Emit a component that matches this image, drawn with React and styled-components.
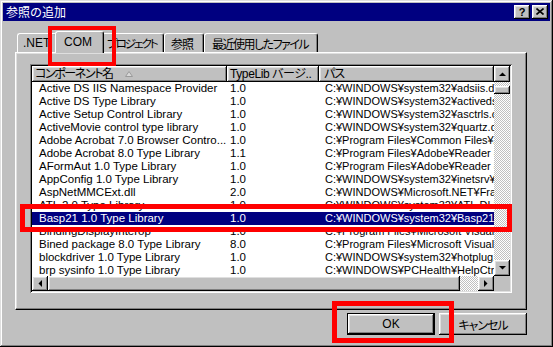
import React from "react";
import styled, { createGlobalStyle } from "styled-components";

const FONT = `"Liberation Sans", "Noto Sans CJK JP", sans-serif`;
const CJK = `"Noto Sans CJK JP", "Liberation Sans", sans-serif`;

const GlobalStyle = createGlobalStyle`
  * { box-sizing: border-box; }
  html, body { margin: 0; padding: 0; background: #c0c0c0; }
  body { font-family: ${FONT}; font-size: 12px; color: #000; overflow: hidden; }
`;

const RAISED =
  "inset -1px -1px #000, inset 1px 1px #fff, inset -2px -2px #808080, inset 2px 2px #dfdfdf";

const Window = styled.div`
  position: relative;
  width: 553px;
  height: 347px;
  padding: 3px;
  background: #c0c0c0;
  box-shadow: inset -1px -1px #000, inset 1px 1px #dfdfdf, inset -2px -2px #808080,
    inset 2px 2px #fff;
  display: flex;
  flex-direction: column;
`;

const TitleBar = styled.div`
  height: 18px;
  flex-shrink: 0;
  background: #000080;
  color: #fff;
  display: flex;
  align-items: center;
  justify-content: space-between;
  padding: 0 2px;
`;

const TitleText = styled.span`
  font-family: ${CJK};
  font-size: 12px;
  line-height: 18px;
  padding-left: 1px;
`;

const TitleButtons = styled.div`
  display: flex;
  gap: 2px;
`;

const TitleButton = styled.div`
  width: 16px;
  height: 14px;
  background: #c0c0c0;
  box-shadow: ${RAISED};
  display: flex;
  align-items: center;
  justify-content: center;
  font: bold 11px ${FONT};
  color: #000;
  padding-bottom: 1px;
`;

const Body = styled.div`
  flex: 1;
  display: flex;
  flex-direction: column;
  padding: 10px 0 0 12px;
`;

const TabStrip = styled.div`
  height: 21px;
  display: flex;
  align-items: flex-end;
  padding-left: 2px;
`;

const Tab = styled.div`
  position: relative;
  z-index: ${(p) => (p.$active ? 2 : 1)};
  flex-shrink: 0;
  width: ${(p) => p.$w}px;
  height: ${(p) => (p.$active ? 22 : 19)}px;
  margin: 0 ${(p) => (p.$active ? -2 : 0)}px ${(p) => (p.$active ? -1 : 0)}px
    ${(p) => (p.$active ? -2 : 0)}px;
  padding-left: ${(p) => p.$pl}px;
  padding-bottom: ${(p) => (p.$active ? 2 : 0)}px;
  display: flex;
  align-items: center;
  background: #c0c0c0;
  border: 1px solid #fff;
  border-bottom: none;
  border-right-color: #000;
  border-radius: 3px 3px 0 0;
  box-shadow: inset -1px 0 #808080;
  white-space: nowrap;
  overflow: hidden;
  font-family: ${FONT};
  font-size: ${(p) => p.$fs || 12}px;
  letter-spacing: ${(p) => p.$ls || 0}px;
  font-feature-settings: "palt";
`;

const Panel = styled.div`
  width: 512px;
  height: 258px;
  flex-shrink: 0;
  border-top: 1px solid #fff;
  border-left: 1px solid #fff;
  border-right: 1px solid #000;
  border-bottom: 1px solid #000;
  box-shadow: inset -1px -1px #808080, inset 1px 1px #dfdfdf;
  padding: 11px 0 0 14px;
`;

const ListView = styled.div`
  width: 482px;
  height: 229px;
  padding: 2px;
  background: #fff;
  box-shadow: inset 1px 1px #808080, inset -1px -1px #fff, inset 2px 2px #000,
    inset -2px -2px #dfdfdf;
  display: grid;
  grid-template-columns: 1fr 16px;
  grid-template-rows: 1fr 15px;
`;

const ListContent = styled.div`
  overflow: hidden;
  display: flex;
  flex-direction: column;
`;

const HeaderRow = styled.div`
  display: flex;
  height: 16px;
  flex-shrink: 0;
`;

const HeaderCell = styled.div`
  flex-shrink: 0;
  width: ${(p) => p.$w}px;
  height: 16px;
  padding-left: ${(p) => p.$pl}px;
  background: #c0c0c0;
  box-shadow: ${RAISED};
  display: flex;
  align-items: center;
  overflow: hidden;
  white-space: nowrap;
  font-family: ${FONT};
  font-size: 12px;
  letter-spacing: ${(p) => p.$ls || 0}px;
  font-feature-settings: "palt";
  line-height: 16px;
`;

const SortArrow = styled.svg`
  margin-left: 12px;
  flex-shrink: 0;
`;

const Row = styled.div`
  display: flex;
  height: 13px;
  flex-shrink: 0;
  background: ${(p) => (p.$selected ? "#000080" : "#fff")};
  color: ${(p) => (p.$selected ? "#fff" : "#000")};
`;

const Cell = styled.div`
  flex-shrink: 0;
  width: ${(p) => p.$w}px;
  padding-left: ${(p) => p.$pl}px;
  overflow: hidden;
  white-space: nowrap;
  font-family: ${FONT};
  font-size: ${(p) => p.$fs || 11.5}px;
  line-height: 13px;
`;

const VScroll = styled.div`
  display: flex;
  flex-direction: column;
`;

const HScroll = styled.div`
  display: flex;
`;

const ScrollButton = styled.div`
  flex-shrink: 0;
  width: 16px;
  height: ${(p) => p.$h || 16}px;
  background: #c0c0c0;
  box-shadow: ${RAISED};
  display: flex;
  align-items: center;
  justify-content: center;
`;

const Track = styled.div`
  flex: 1;
  display: flex;
  flex-direction: ${(p) => (p.$vertical ? "column" : "row")};
  background-color: #c0c0c0;
  background-image: repeating-conic-gradient(#fff 0 25%, #c0c0c0 0 50%);
  background-size: 2px 2px;
`;

const Thumb = styled.div`
  flex-shrink: 0;
  width: ${(p) => p.$w}px;
  height: ${(p) => p.$h}px;
  margin-top: ${(p) => p.$mt || 0}px;
  background: #c0c0c0;
  box-shadow: ${RAISED};
`;

const Corner = styled.div`
  background: #c0c0c0;
`;

const ButtonRow = styled.div`
  width: 512px;
  display: flex;
  justify-content: flex-end;
  gap: 4px;
  margin-top: 3px;
`;

const Button = styled.div`
  width: 88px;
  height: 22px;
  background: #c0c0c0;
  border: ${(p) => (p.$default ? "1px solid #000" : "none")};
  box-shadow: ${RAISED};
  display: flex;
  align-items: center;
  justify-content: center;
  font-family: ${FONT};
  font-size: 12px;
  letter-spacing: ${(p) => p.$ls || 0}px;
  font-feature-settings: "palt";
  color: #000;
`;

const Highlight = styled.div`
  position: absolute;
  left: ${(p) => p.$x}px;
  top: ${(p) => p.$y}px;
  width: ${(p) => p.$w}px;
  height: ${(p) => p.$h}px;
  border: ${(p) => p.$t}px solid #ff0000;
  pointer-events: none;
  z-index: 10;
`;

const Arrow = ({ dir }) => {
  const pts = {
    up: "0,4 7,4 3.5,0.5",
    down: "0,0 7,0 3.5,3.5",
    left: "4,0 4,7 0.5,3.5",
    right: "0,0 0,7 3.5,3.5",
  }[dir];
  const vertical = dir === "up" || dir === "down";
  return (
    <svg width={vertical ? 7 : 4} height={vertical ? 4 : 7} viewBox={vertical ? "0 0 7 4" : "0 0 4 7"}>
      <polygon points={pts} fill="#000" />
    </svg>
  );
};

const rows = [
  ["Active DS IIS Namespace Provider", "1.0", "C:¥WINDOWS¥system32¥adsiis.dll"],
  ["Active DS Type Library", "1.0", "C:¥WINDOWS¥system32¥activeds.tlb"],
  ["Active Setup Control Library", "1.0", "C:¥WINDOWS¥system32¥asctrls.ocx"],
  ["ActiveMovie control type library", "1.0", "C:¥WINDOWS¥system32¥quartz.dll"],
  ["Adobe Acrobat 7.0 Browser Contro...", "1.0", "C:¥Program Files¥Common Files¥Adobe"],
  ["Adobe Acrobat 8.0 Type Library", "1.1", "C:¥Program Files¥Adobe¥Reader 8.0"],
  ["AFormAut 1.0 Type Library", "1.0", "C:¥Program Files¥Adobe¥Reader 8.0"],
  ["AppConfig 1.0 Type Library", "1.0", "C:¥WINDOWS¥system32¥inetsrv¥appconf"],
  ["AspNetMMCExt.dll", "2.0", "C:¥WINDOWS¥Microsoft.NET¥Framework"],
  ["ATL 2.0 Type Library", "1.0", "C:¥WINDOWS¥system32¥ATL.DLL"],
  ["Basp21 1.0 Type Library", "1.0", "C:¥WINDOWS¥system32¥Basp21.dll"],
  ["BindingDisplayInterop", "1.0", "C:¥Program Files¥Microsoft Visual"],
  ["Bined package 8.0 Type Library", "8.0", "C:¥Program Files¥Microsoft Visual"],
  ["blockdriver 1.0 Type Library", "1.0", "C:¥WINDOWS¥system32¥hotplug.dll"],
  ["brp sysinfo 1.0 Type Library", "1.0", "C:¥WINDOWS¥PCHealth¥HelpCtr¥"],
];

const COLS = [195, 92, 175];

export default function App() {
  return (
    <>
      <GlobalStyle />
      <Window>
        <TitleBar>
          <TitleText>参照の追加</TitleText>
          <TitleButtons>
            <TitleButton>?</TitleButton>
            <TitleButton>
              <svg width="8" height="7" viewBox="0 0 8 7">
                <path d="M0.5 0.5 L7.5 6.5 M7.5 0.5 L0.5 6.5" stroke="#000" strokeWidth="1.6" />
              </svg>
            </TitleButton>
          </TitleButtons>
        </TitleBar>
        <Body>
          <TabStrip>
            <Tab $w={40} $pl={5}>.NET</Tab>
            <Tab $w={49} $pl={8} $active>COM</Tab>
            <Tab $w={62} $pl={4} $fs={11.5} $ls={-2}>プロジェクト</Tab>
            <Tab $w={40} $pl={6} $ls={-1}>参照</Tab>
            <Tab $w={114} $pl={7} $ls={-1.5}>最近使用したファイル</Tab>
          </TabStrip>
          <Panel>
            <ListView>
              <ListContent>
                <HeaderRow>
                  <HeaderCell $w={COLS[0]} $pl={3} $ls={-1.4}>
                    コンポーネント名
                    <SortArrow width="8" height="6" viewBox="0 0 8 6">
                      <polygon points="0.5,5.5 7.5,5.5 4,0.5" fill="#d8d8d8" stroke="#9a9a9a" strokeWidth="1" />
                    </SortArrow>
                  </HeaderCell>
                  <HeaderCell $w={COLS[1]} $pl={3} $ls={-0.4}>TypeLib バージ..</HeaderCell>
                  <HeaderCell $w={COLS[2]} $pl={5} $ls={-1}>パス</HeaderCell>
                </HeaderRow>
                {rows.map((r, i) => (
                  <Row key={i} $selected={i === 10}>
                    <Cell $w={COLS[0]} $pl={7}>{r[0]}</Cell>
                    <Cell $w={COLS[1]} $pl={3}>{r[1]}</Cell>
                    <Cell $w={COLS[2]} $pl={6} $fs={11}>{r[2]}</Cell>
                  </Row>
                ))}
              </ListContent>
              <VScroll>
                <ScrollButton><Arrow dir="up" /></ScrollButton>
                <Track $vertical>
                  <Thumb $w={16} $h={8} $mt={4} />
                </Track>
                <ScrollButton><Arrow dir="down" /></ScrollButton>
              </VScroll>
              <HScroll>
                <ScrollButton $h={15}><Arrow dir="left" /></ScrollButton>
                <Thumb $w={412} $h={15} />
                <Track />
                <ScrollButton $h={15}><Arrow dir="right" /></ScrollButton>
              </HScroll>
              <Corner />
            </ListView>
          </Panel>
          <ButtonRow>
            <Button $default>OK</Button>
            <Button $ls={-1}>キャンセル</Button>
          </ButtonRow>
        </Body>
        <Highlight $x={48} $y={26} $w={68} $h={40} $t={4} />
        <Highlight $x={20} $y={204} $w={492} $h={28} $t={5} />
        <Highlight $x={332} $y={301} $w={122} $h={42} $t={5} />
      </Window>
    </>
  );
}
